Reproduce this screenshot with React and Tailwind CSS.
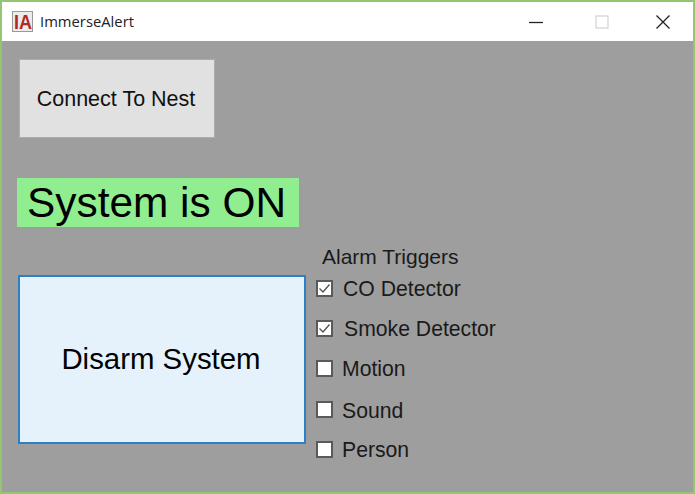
const F = { fontFamily: '"Liberation Sans", Arial, sans-serif' };

function Box({ checked }) {
  return (
    <span className="w-[17px] h-[17px] shrink-0 bg-white border-2 border-[#5a5a5a] flex items-center justify-center">
      {checked && (
        <svg width="13" height="13" viewBox="0 0 13 13" fill="none">
          <path d="M1.5 6.5 L5 10 L11.5 2.5" stroke="#555" strokeWidth="1.4" />
        </svg>
      )}
    </span>
  );
}

function Row({ label, checked, h, gap, mt }) {
  return (
    <div className={`flex items-center ${h} ${gap} ${mt}`}>
      <Box checked={checked} />
      <span className="text-[21.2px] leading-none pt-[2px] text-[#1a1a1a]">{label}</span>
    </div>
  );
}

export default function App() {
  return (
    <div style={F} className="w-[695px] h-[494px] flex flex-col bg-[#9e9e9e] border-2 border-[#93c572] overflow-hidden">
      <div className="h-[39px] shrink-0 bg-white flex items-center">
        <div className="ml-[10px] w-[21px] h-[21px] bg-[#ececec] border border-[#999] flex items-center justify-center">
          <span className="text-[20px] font-bold leading-none scale-x-90 text-[#b02a2a]">IA</span>
        </div>
        <span style={{ fontFamily: '"Open Sans", sans-serif' }} className="ml-[7px] text-[14.8px] text-[#222]">ImmerseAlert</span>
        <div className="ml-auto flex items-center">
          <svg width="16" height="16" viewBox="0 0 16 16" className="mr-[51px]">
            <path d="M1 8.5 H15" stroke="#222" strokeWidth="1.3" />
          </svg>
          <svg width="14" height="14" viewBox="0 0 14 14" className="mr-[46px]">
            <rect x="1" y="1" width="12" height="12" fill="none" stroke="#d2d2d2" strokeWidth="1.2" />
          </svg>
          <svg width="16" height="16" viewBox="0 0 16 16" className="mr-[22px]">
            <path d="M1.5 1.5 L14.5 14.5 M14.5 1.5 L1.5 14.5" stroke="#222" strokeWidth="1.3" />
          </svg>
        </div>
      </div>
      <div className="flex-1 flex flex-col pl-[15px]">
        <button className="mt-[18px] ml-[2px] w-[196px] h-[79px] pt-[2px] pr-[2px] bg-[#e1e1e1] border border-[#adadad] text-[21.5px] text-[#111]">
          Connect To Nest
        </button>
        <div className="mt-[40px] w-[282px] h-[49px] bg-[#90ee90] pl-[10px] pt-[2px] flex items-center text-[42.4px] leading-none text-black">
          System is ON
        </div>
        <div className="flex mt-[14px]">
          <button className="mt-[34px] ml-[1px] w-[288px] h-[169px] pr-[2px] bg-[#e5f1fb] border-2 border-[#2f7fc4] text-[29.4px] text-black">
            Disarm System
          </button>
          <div className="flex flex-col ml-[10px]">
            <div className="ml-[6px] h-[30px] flex items-center text-[21px] leading-none text-[#1a1a1a]">Alarm Triggers</div>
            <div className="flex flex-col mt-[2px]">
              <Row label="CO Detector" checked h="h-[30px]" gap="gap-[10px]" />
              <Row label="Smoke Detector" checked h="h-[30px]" gap="gap-[11px]" mt="mt-[10px]" />
              <Row label="Motion" h="h-[30px]" gap="gap-[9px]" mt="mt-[10px]" />
              <Row label="Sound" h="h-[31px]" gap="gap-[9px]" mt="mt-[11px]" />
              <Row label="Person" h="h-[30px]" gap="gap-[9px]" mt="mt-[9px]" />
            </div>
          </div>
        </div>
      </div>
    </div>
  );
}
